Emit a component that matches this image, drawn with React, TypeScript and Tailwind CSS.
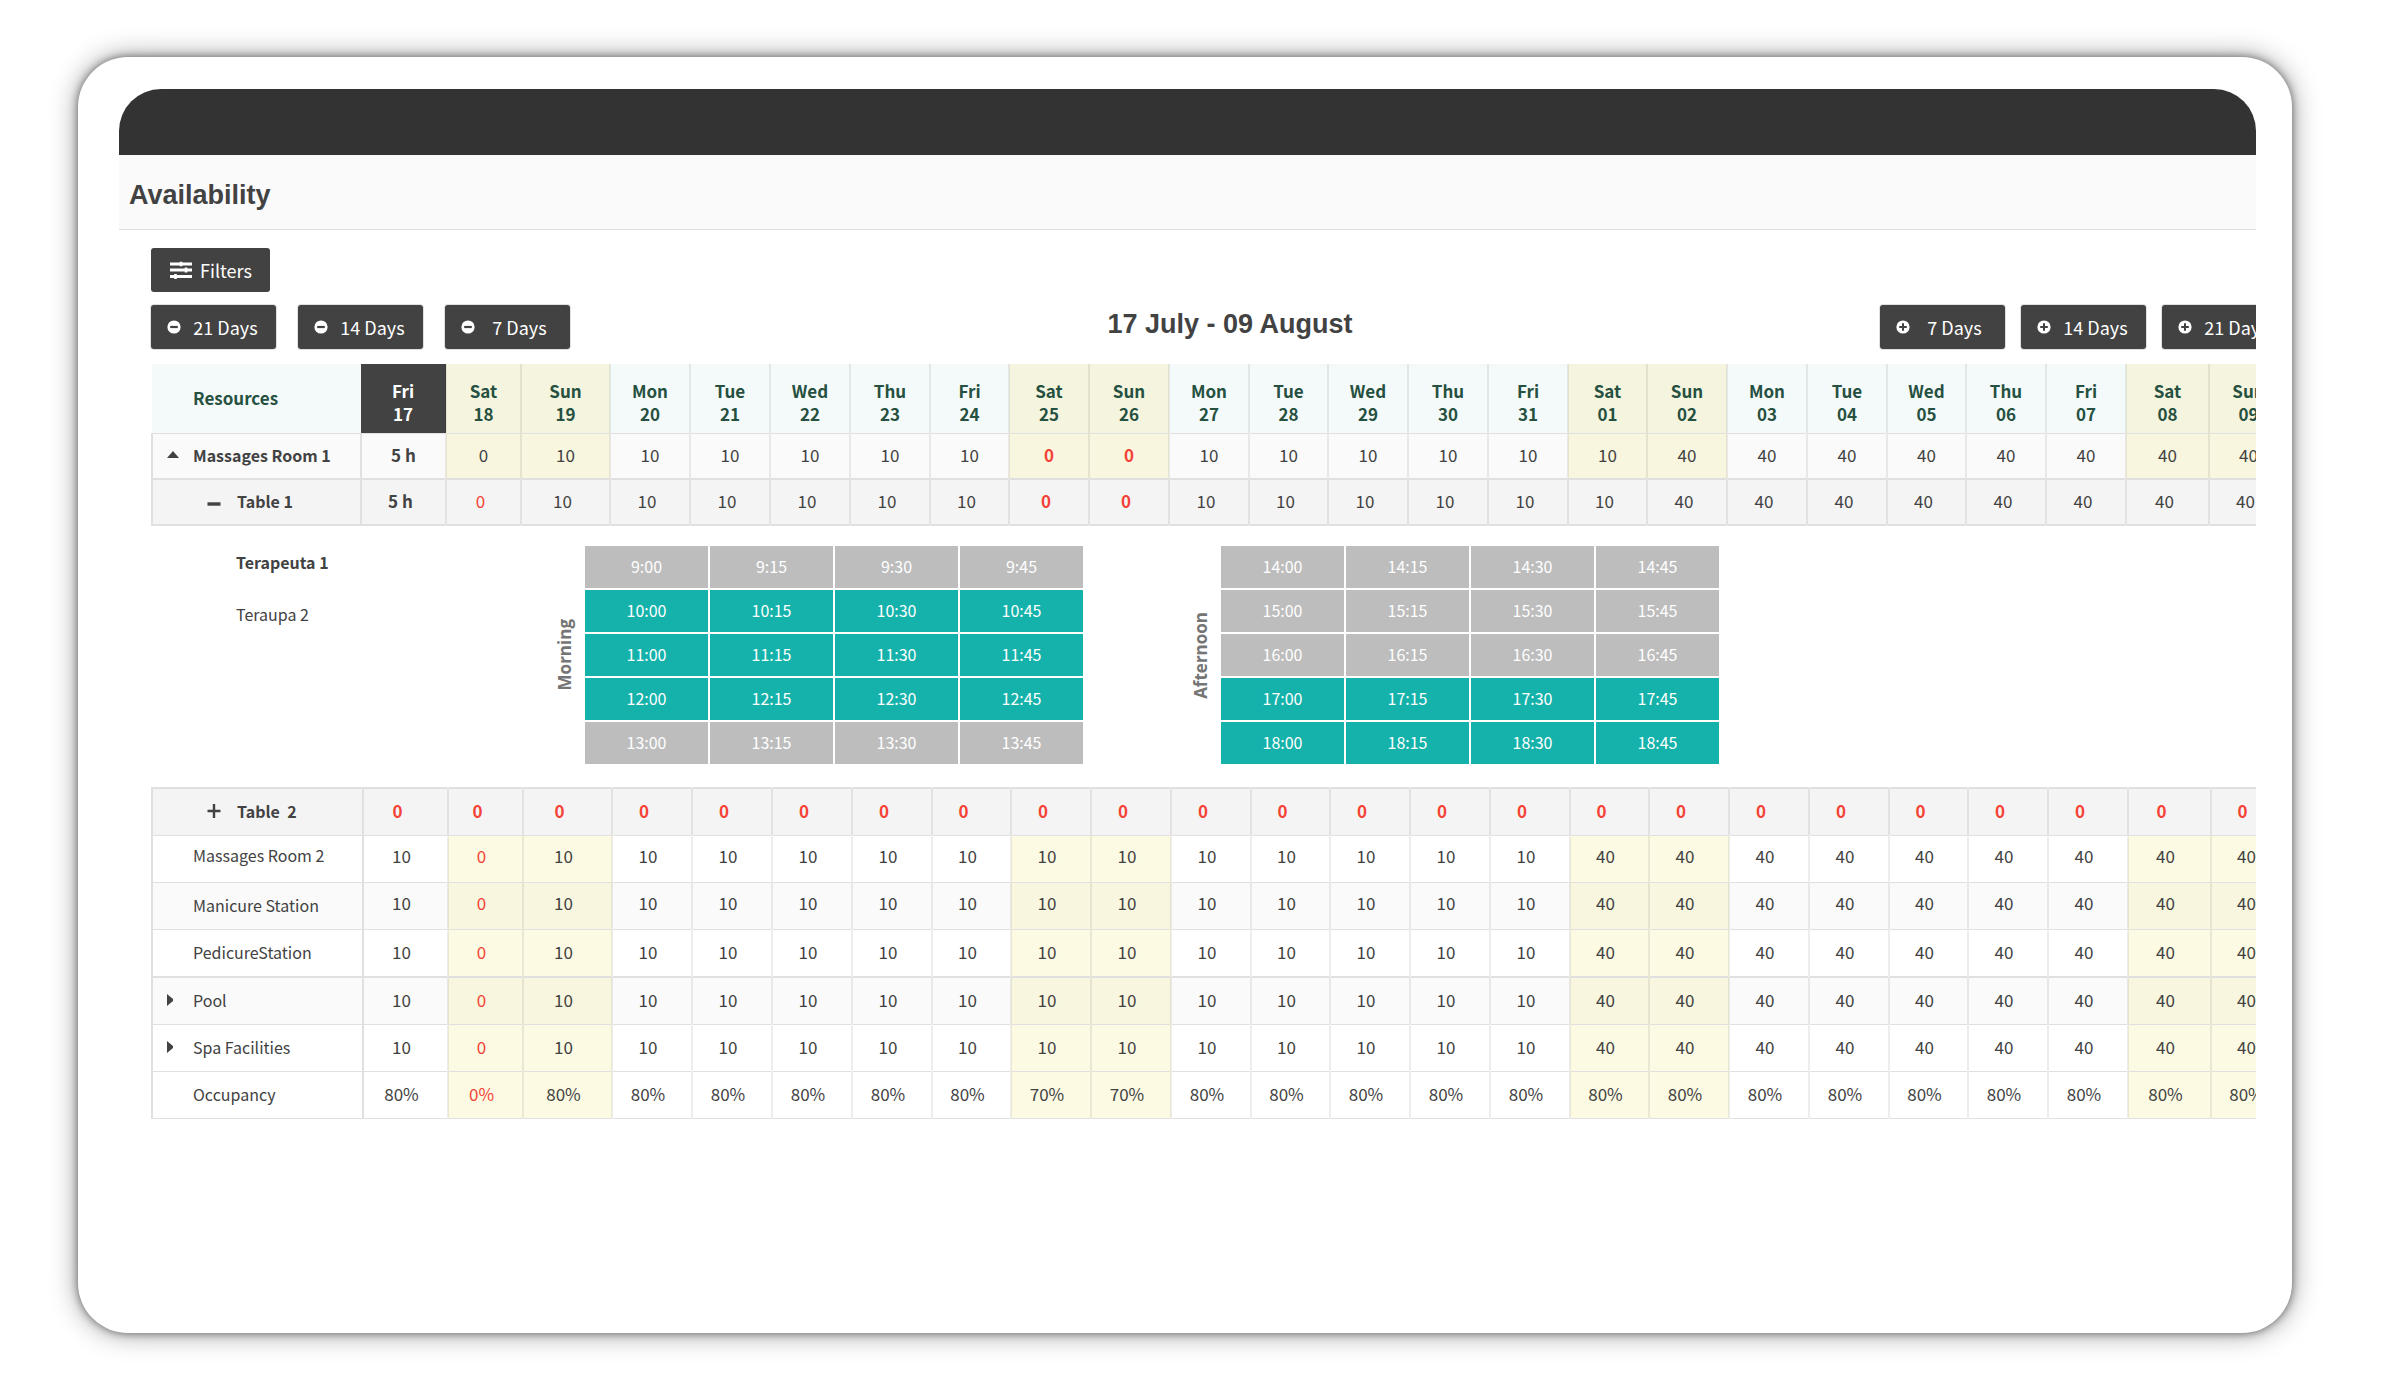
import React from 'react';
import clsx from 'clsx';

type Tone = 'normal' | 'red' | 'redBold' | 'bold';

interface Day {
  name: string;
  num: string;
}

interface Row {
  label: string;
  values: string[];
  icon?: 'up' | 'right' | 'minus' | 'plus';
  nested?: boolean;
  boldLabel?: boolean;
  className: string;
  cellClass: string;
  tones: Record<number, Tone>;
  allRed?: boolean;
}

const names = ['Fri', 'Sat', 'Sun', 'Mon', 'Tue', 'Wed', 'Thu'];

const days: Day[] = Array.from({ length: 24 }, (_, i) => {
  const num = i < 15 ? 17 + i : i - 14;
  return { name: names[i % 7], num: String(num).padStart(2, '0') };
});

const isWeekend = (i: number) => i % 7 === 1 || i % 7 === 2;

const fill = (before: string, after: string, splitAt: number, first: string[] = []) =>
  days.map((_, i) => first[i] ?? (i < splitAt ? before : after));

const withClosed = (values: string[]) => values.map((v, i) => (i === 8 || i === 9 ? '0' : v));

const upperRows: Row[] = [
  {
    label: 'Massages Room 1',
    icon: 'up',
    boldLabel: true,
    values: withClosed(fill('10', '40', 16, ['5 h', '0'])),
    className: 'h-[46px] bg-[#fafafa] border-b-2',
    cellClass: 'pb-0.5',
    tones: { 0: 'bold', 8: 'redBold', 9: 'redBold' },
  },
  {
    label: 'Table 1',
    icon: 'minus',
    nested: true,
    boldLabel: true,
    values: withClosed(fill('10', '40', 16, ['5 h', '0'])),
    className: 'h-[46px] bg-[#f4f4f4] border-b-2',
    cellClass: 'pr-1.5 pb-0.5',
    tones: { 0: 'bold', 1: 'red', 8: 'redBold', 9: 'redBold' },
  },
];

const lowerRows: Row[] = [
  {
    label: 'Table  2',
    icon: 'plus',
    nested: true,
    boldLabel: true,
    values: fill('0', '0', 15),
    className: 'h-[47px] bg-[#f4f4f4] border-t-2 border-b',
    cellClass: 'pr-4 pb-0.5',
    tones: {},
    allRed: true,
  },
  {
    label: 'Massages Room 2',
    values: fill('10', '40', 15, ['10', '0']),
    className: 'h-[47px] bg-white border-b',
    cellClass: 'pr-2 pb-1.5',
    tones: { 1: 'red' },
  },
  {
    label: 'Manicure Station',
    values: fill('10', '40', 15, ['10', '0']),
    className: 'h-[47px] bg-[#fafafa] border-b',
    cellClass: 'pr-2 pb-1.5',
    tones: { 1: 'red' },
  },
  {
    label: 'PedicureStation',
    values: fill('10', '40', 15, ['10', '0']),
    className: 'h-[48px] bg-white border-b-2',
    cellClass: 'pr-2 pb-0.5',
    tones: { 1: 'red' },
  },
  {
    label: 'Pool',
    icon: 'right',
    values: fill('10', '40', 15, ['10', '0']),
    className: 'h-[47px] bg-[#fafafa] border-b',
    cellClass: 'pr-2 pb-0.5',
    tones: { 1: 'red' },
  },
  {
    label: 'Spa Facilities',
    icon: 'right',
    values: fill('10', '40', 15, ['10', '0']),
    className: 'h-[47px] bg-white border-b',
    cellClass: 'pr-2 pb-0.5',
    tones: { 1: 'red' },
  },
  {
    label: 'Occupancy',
    values: fill('80%', '80%', 15, ['80%', '0%']).map((v, i) => (i === 8 || i === 9 ? '70%' : v)),
    className: 'h-[47px] bg-white border-b',
    cellClass: 'pr-2 pb-0.5',
    tones: { 1: 'red' },
  },
];

const getToneClass = (tone: Tone) => {
  switch (tone) {
    case 'red':
      return 'text-[#f44336]';
    case 'redBold':
      return 'text-[#f44336] font-bold';
    case 'bold':
      return 'font-bold';
    default:
      return '';
  }
};

const getColumnClass = (i: number) => {
  if (i === 0) return 'w-[85px]';
  if (i === 1) return 'w-[75px]';
  if (i === 2) return 'w-[89px]';
  if (i === 22) return 'w-[83px]';
  return i > 3 && i % 4 === 3 ? 'w-[79px]' : 'w-20';
};

const MinusCircle = () => (
  <svg viewBox="0 0 14 14" className="size-3.5" aria-hidden="true">
    <circle cx="7" cy="7" r="6.6" fill="#fff" />
    <path d="M3.2 7h7.6" stroke="#424242" strokeWidth="2.2" />
  </svg>
);

const PlusCircle = () => (
  <svg viewBox="0 0 14 14" className="size-3.5" aria-hidden="true">
    <circle cx="7" cy="7" r="6.6" fill="#fff" />
    <path d="M3.2 7h7.6M7 3.2v7.6" stroke="#424242" strokeWidth="2" />
  </svg>
);

const FilterIcon = () => (
  <svg viewBox="0 0 22 18" className="h-[18px] w-[22px]" aria-hidden="true">
    <path d="M0 3h22M0 9h22M0 15.5h22" stroke="#fff" strokeWidth="2.8" />
    <path d="M11 .8v4.4M16 6.5v5M5.5 13v5" stroke="#fff" strokeWidth="2.6" />
  </svg>
);

const RowIcon = ({ icon }: { icon: Row['icon'] }) => {
  switch (icon) {
    case 'up':
      return (
        <svg viewBox="0 0 12 7" className="h-[7px] w-3" aria-hidden="true">
          <path d="M6 0l6 7H0z" fill="#424242" />
        </svg>
      );
    case 'right':
      return (
        <svg viewBox="0 0 6 12" className="h-3 w-1.5" aria-hidden="true">
          <path d="M0 0l6 5v2l-6 5z" fill="#424242" />
        </svg>
      );
    case 'minus':
      return (
        <svg viewBox="0 0 14 14" className="size-3.5" aria-hidden="true">
          <path d="M.5 10h13" stroke="#424242" strokeWidth="3.4" />
        </svg>
      );
    case 'plus':
      return (
        <svg viewBox="0 0 14 14" className="size-3.5" aria-hidden="true">
          <path d="M.5 7h13M7 0v14" stroke="#424242" strokeWidth="2.4" />
        </svg>
      );
    default:
      return null;
  }
};

const DaysButton = ({ label, plus }: { label: string; plus?: boolean }) => (
  <button
    type="button"
    className="flex h-11 w-[125px] shrink-0 items-center rounded-[3px] bg-[#424242] pl-4 text-lg text-white shadow-[0_0_0_1px_#e0e0e0]"
  >
    {plus ? <PlusCircle /> : <MinusCircle />}
    <span className="flex-1 pr-1.5 text-center whitespace-nowrap">{label}</span>
  </button>
);

const ResourceRow = ({ row, tinted }: { row: Row; tinted: boolean }) => (
  <tr className={clsx('border-[#e0e0e0]', row.className)}>
    <th
      scope="row"
      className={clsx(
        'border-x-2 border-[#e0e0e0] text-left text-base whitespace-pre',
        row.boldLabel ? 'font-bold' : 'font-normal',
        row.label === 'Massages Room 2' ? 'pb-2' : 'pb-0.5'
      )}
    >
      {row.icon ? (
        <button
          type="button"
          aria-expanded={row.icon === 'up' || row.icon === 'minus'}
          className={clsx('flex items-center', row.nested ? 'pl-[54px]' : 'pl-3.5')}
        >
          <span className={clsx('flex shrink-0 items-center', row.nested ? 'w-[30px]' : 'w-[26px]')}>
            <RowIcon icon={row.icon} />
          </span>
          {row.label}
        </button>
      ) : (
        <span className="pl-10">{row.label}</span>
      )}
    </th>
    {row.values.map((value, i) => (
      <td
        key={i}
        className={clsx(
          'border-r-2 border-[#00000012] text-center',
          row.cellClass,
          tinted && isWeekend(i) && 'bg-[#f5eb8c40]',
          getToneClass(row.allRed ? 'redBold' : row.tones[i] ?? 'normal')
        )}
      >
        {value}
      </td>
    ))}
  </tr>
);

const Columns = ({ labelClass }: { labelClass: string }) => (
  <colgroup>
    <col className={labelClass} />
    {days.map((_, i) => (
      <col key={i} className={getColumnClass(i)} />
    ))}
  </colgroup>
);

interface SlotGridProps {
  title: string;
  startHour: number;
  openHours: number[];
}

const SlotGrid = ({ title, startHour, openHours }: SlotGridProps) => (
  <section className="flex items-center gap-2">
    <h3 className="rotate-180 font-['Open_Sans','Noto_Sans',sans-serif] text-[17px] leading-6 font-bold text-[#757575] [writing-mode:vertical-rl]">
      {title}
    </h3>
    <div className="grid grid-cols-[repeat(4,123px)] gap-x-[2px] gap-y-[2px]">
      {Array.from({ length: 5 }, (_, i) => startHour + i).map((hour) =>
        ['00', '15', '30', '45'].map((minutes) => (
          <button
            key={`${hour}:${minutes}`}
            type="button"
            disabled={!openHours.includes(hour)}
            className={clsx(
              'h-[42px] pb-0.5 text-base text-white',
              openHours.includes(hour) ? 'bg-[#14b2aa]' : 'bg-[#bdbdbd]'
            )}
          >
            {hour}:{minutes}
          </button>
        ))
      )}
    </div>
  </section>
);

const App: React.FC = () => {
  return (
    <div className="min-h-screen bg-white pt-[57px] pr-[92px] pb-[50px] pl-[78px] font-['Noto_Sans_CJK_SC','Noto_Sans',sans-serif] text-[17px] text-[#424242]">
      <div className="min-h-[1276px] overflow-hidden rounded-[50px] bg-white pt-8 pr-9 pl-[41px] shadow-[0_0_8px_rgba(0,0,0,0.5),0_0_28px_rgba(0,0,0,0.4)]">
        <div className="overflow-hidden rounded-t-[42px]">
          <header>
            <div className="h-[66px] bg-[#333333]"></div>
            <div className="flex h-[75px] items-center border-b border-[#e0e0e0] bg-[#fafafa] px-2.5 pt-1.5">
              <h1 className="font-['Liberation_Sans',Arial,sans-serif] text-[27px] leading-9 font-bold">
                Availability
              </h1>
            </div>
          </header>

          <main className="pt-[18px] pl-8">
            <button
              type="button"
              className="flex h-11 w-[119px] items-center gap-2 rounded-[3px] bg-[#424242] pl-[19px] text-lg text-white"
            >
              <FilterIcon />
              Filters
            </button>

            <div className="mt-[13px] flex h-11 items-center justify-between">
              <div className="flex gap-[22px]">
                <DaysButton label="21 Days" />
                <DaysButton label="14 Days" />
                <DaysButton label="7 Days" />
              </div>
              <h2 className="ml-2.5 pb-1.5 font-['Liberation_Sans',Arial,sans-serif] text-[27px] leading-9 font-bold">
                17 July - 09 August
              </h2>
              <div className="-mr-[31px] flex gap-4">
                <DaysButton label="7 Days" plus />
                <DaysButton label="14 Days" plus />
                <DaysButton label="21 Days" plus />
              </div>
            </div>

            <table className="mt-[15px] w-[2137px] table-fixed border-collapse">
              <Columns labelClass="w-[209px]" />
              <thead>
                <tr className="h-[69px] border-b border-[#e0e0e0] text-[#26503f]">
                  <th scope="col" className="bg-[#f4fafa] pb-0.5 pl-[41px] text-left">
                    Resources
                  </th>
                  {days.map((day, i) => (
                    <th
                      key={i}
                      scope="col"
                      className={clsx(
                        'border-r-2 border-[#00000012] pt-2 leading-[23px]',
                        i === 0 ? 'bg-[#424242] text-white' : isWeekend(i) ? 'bg-[#f4f4df]' : 'bg-[#f4fafa]'
                      )}
                    >
                      {day.name}
                      <br />
                      {day.num}
                    </th>
                  ))}
                </tr>
              </thead>
              <tbody>
                {upperRows.map((row) => (
                  <ResourceRow key={row.label} row={row} tinted={row.label !== 'Table 1'} />
                ))}
              </tbody>
            </table>

            <div className="flex h-[261px]">
              <ul className="w-[369px] shrink-0 pt-6 pl-[85px] text-base">
                <li className="h-[52px] font-bold">Terapeuta 1</li>
                <li>Teraupa 2</li>
              </ul>
              <div className="flex items-start gap-[106px] pt-5 pl-[33px]">
                <SlotGrid title="Morning" startHour={9} openHours={[10, 11, 12]} />
                <SlotGrid title="Afternoon" startHour={14} openHours={[17, 18]} />
              </div>
            </div>

            <table className="w-[2139px] table-fixed border-collapse">
              <Columns labelClass="w-[211px]" />
              <tbody>
                {lowerRows.map((row, i) => (
                  <ResourceRow key={row.label} row={row} tinted={i > 0} />
                ))}
              </tbody>
            </table>
          </main>
        </div>
      </div>
    </div>
  );
};

export default App;
